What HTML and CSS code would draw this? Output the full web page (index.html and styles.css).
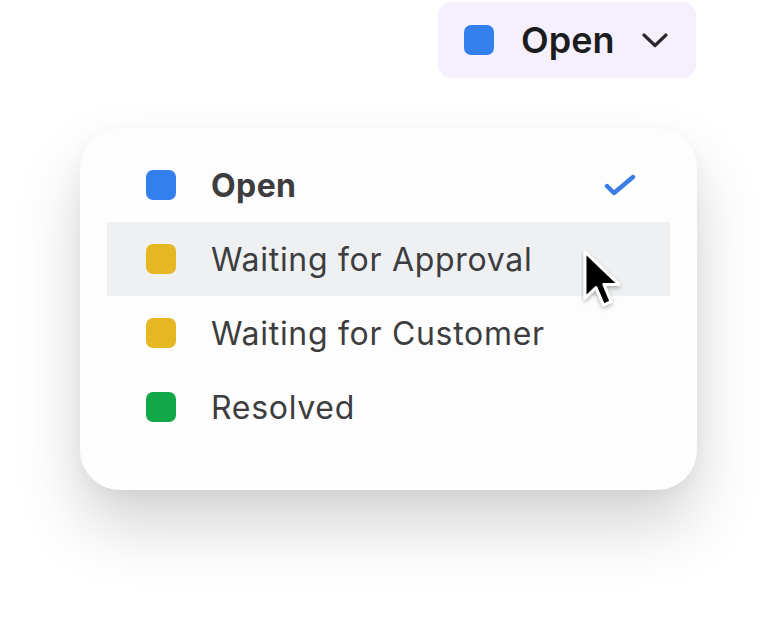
FILE: index.html
```html
<!DOCTYPE html>
<html lang="en">
<head>
<meta charset="utf-8">
<title>Status dropdown</title>
<link rel="stylesheet" href="styles.css">
</head>
<body>
<div class="stage">
  <div class="trigger-row">
    <button class="trigger">
      <span class="swatch swatch-blue"></span>
      <span class="trigger-label">Open</span>
      <svg class="chevron" width="26" height="15" viewBox="0 0 26 15"><path d="M2 2 L13 12.5 L24 2" fill="none" stroke="#2a2a2c" stroke-width="3.2" stroke-linecap="round" stroke-linejoin="round"/></svg>
    </button>
  </div>
  <div class="menu">
    <div class="item selected">
      <span class="swatch swatch-blue"></span>
      <span class="label">Open</span>
      <svg class="check" width="32" height="24" viewBox="0 0 32 24"><path d="M3 13 L10 20 L29 4" fill="none" stroke="#3a7de6" stroke-width="4.4" stroke-linecap="round" stroke-linejoin="round"/></svg>
    </div>
    <div class="item hover">
      <span class="swatch swatch-yellow"></span>
      <span class="label">Waiting for Approval</span>
      <svg class="cursor" width="44" height="66" viewBox="0 0 44 66">
        <defs>
          <filter id="cs" x="-30%" y="-30%" width="160%" height="160%">
            <feDropShadow dx="0" dy="2" stdDeviation="2" flood-color="#000" flood-opacity="0.3"/>
          </filter>
        </defs>
        <path d="M4 3 L4 49 L15 38.5 L22.5 56 L30 52.5 L22.8 35.5 L38 35.5 Z" fill="#000" stroke="#fff" stroke-width="3" stroke-linejoin="round" filter="url(#cs)"/>
      </svg>
    </div>
    <div class="item">
      <span class="swatch swatch-yellow"></span>
      <span class="label">Waiting for Customer</span>
    </div>
    <div class="item">
      <span class="swatch swatch-green"></span>
      <span class="label">Resolved</span>
    </div>
  </div>
</div>
</body>
</html>
```
FILE: styles.css
```css
html, body {
  margin: 0;
  padding: 0;
  background: #ffffff;
}
body {
  font-family: Inter, "Noto Sans", "Liberation Sans", sans-serif;
  width: 779px;
  height: 622px;
  overflow: hidden;
}
.stage {
  display: flex;
  flex-direction: column;
  padding-top: 2px;
}
.trigger-row {
  display: flex;
  justify-content: flex-end;
  padding-right: 83px;
}
.trigger {
  display: flex;
  align-items: center;
  width: 258px;
  height: 76px;
  box-sizing: border-box;
  padding: 0 28px 0 26px;
  border: none;
  border-radius: 13px;
  background: #f5f0fc;
  font-family: inherit;
  cursor: pointer;
}
.trigger .swatch {
  margin-right: 27px;
}
.trigger-label {
  font-size: 36px;
  font-weight: 600;
  color: #1c1c1e;
  letter-spacing: 0;
  flex: 1;
  text-align: left;
}
.chevron {
  display: block;
}
.swatch {
  display: block;
  width: 30px;
  height: 30px;
  border-radius: 7px;
  flex: none;
}
.swatch-blue { background: #3380ec; }
.swatch-yellow { background: #e5b823; }
.swatch-green { background: #13a847; }

.menu {
  margin: 50px 0 0 80px;
  width: 617px;
  height: 362px;
  box-sizing: border-box;
  padding: 20px 27px 0;
  border-radius: 40px;
  background: #fdfdfd;
  box-shadow: 0 36px 64px rgba(0, 0, 0, 0.17), 0 6px 20px rgba(0, 0, 0, 0.04);
}
.item {
  position: relative;
  display: flex;
  align-items: center;
  height: 74px;
  padding: 0 34px 0 39px;
}
.item .label {
  margin-left: 35px;
  font-size: 32px;
  letter-spacing: 0.7px;
  color: #3d3d3f;
  flex: 1;
}
.item.selected .label {
  font-weight: 700;
  letter-spacing: 0.4px;
}
.item.hover {
  background: #eef0f2;
}
.check {
  display: block;
}
.cursor {
  position: absolute;
  left: 474px;
  top: 27px;
}
```
